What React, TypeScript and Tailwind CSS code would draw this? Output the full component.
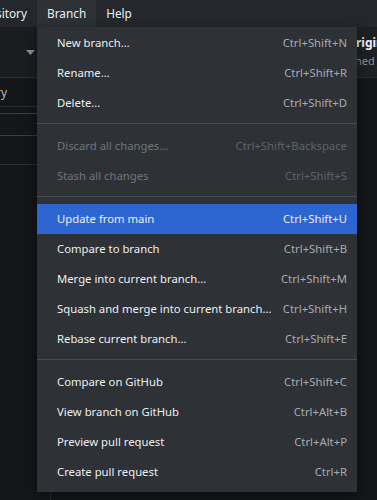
import React from "react";

type Item = { label: string; shortcut: string; disabled?: boolean; active?: boolean };

const groups: Item[][] = [
  [
    { label: "New branch…", shortcut: "Ctrl+Shift+N" },
    { label: "Rename…", shortcut: "Ctrl+Shift+R" },
    { label: "Delete…", shortcut: "Ctrl+Shift+D" },
  ],
  [
    { label: "Discard all changes…", shortcut: "Ctrl+Shift+Backspace", disabled: true },
    { label: "Stash all changes", shortcut: "Ctrl+Shift+S", disabled: true },
  ],
  [
    { label: "Update from main", shortcut: "Ctrl+Shift+U", active: true },
    { label: "Compare to branch", shortcut: "Ctrl+Shift+B" },
    { label: "Merge into current branch…", shortcut: "Ctrl+Shift+M" },
    { label: "Squash and merge into current branch…", shortcut: "Ctrl+Shift+H" },
    { label: "Rebase current branch…", shortcut: "Ctrl+Shift+E" },
  ],
  [
    { label: "Compare on GitHub", shortcut: "Ctrl+Shift+C" },
    { label: "View branch on GitHub", shortcut: "Ctrl+Alt+B" },
    { label: "Preview pull request", shortcut: "Ctrl+Alt+P" },
    { label: "Create pull request", shortcut: "Ctrl+R" },
  ],
];

const MenuRow = ({ item }: { item: Item }) => {
  const bg = item.active ? "bg-[#2e66d1]" : "";
  const labelColor = item.disabled ? "text-[#70747a]" : "text-[#eceef0]";
  const keyColor = item.disabled
    ? "text-[#5f6368]"
    : item.active
    ? "text-[#eceef0]"
    : "text-[#a6abb1]";
  return (
    <div className={`flex items-center justify-between h-[30px] pl-[20px] pr-[10px] ${bg}`}>
      <span className={`whitespace-nowrap ${labelColor}`}>{item.label}</span>
      <span className={`whitespace-nowrap pl-1 ${keyColor}`}>{item.shortcut}</span>
    </div>
  );
};

export default function App() {
  return (
    <div className="relative w-[377px] h-[500px] overflow-hidden bg-[#141619] font-['Noto_Sans','Open_Sans',sans-serif] text-[11.3px]">
      {/* Title / menu bar */}
      <div className="flex items-center h-[27px] bg-[#24272b] text-[#eceef0] text-[11.8px]">
        <div className="w-[37px] pr-[10px] flex justify-end overflow-hidden whitespace-nowrap">
          <span>sitory</span>
        </div>
        <div className="h-full flex items-center px-[10px] bg-[#2e3136]">Branch</div>
        <div className="h-full flex items-center px-[10px]">Help</div>
      </div>

      {/* Toolbar */}
      <div className="flex h-[51px] bg-[#1a1c1f] border-b border-[#2a2d31]">
        <div className="w-[44px] flex items-center justify-end pr-[8px] border-r border-[#2a2d31]">
          <svg width="9" height="5" viewBox="0 0 9 5">
            <path d="M0 0h9L4.5 5z" fill="#8b9096" />
          </svg>
        </div>
        <div className="flex-1" />
        <div className="w-[22px] flex flex-col justify-center overflow-hidden whitespace-nowrap bg-[#1e2124]">
          <span className="pl-[1px] pb-[2px] font-bold text-[#f0f2f4] text-[12px] leading-[16px]">rigin</span>
          <span className="text-[#8b9096] text-[11px] leading-[16px]">hed just now</span>
        </div>
      </div>

      {/* Body */}
      <div className="flex h-full">
        <div className="w-[51px] flex flex-col border-r border-[#2a2d31]">
          <div className="h-[29px] flex items-center pt-[2px] border-b border-[#2a2d31]">
            <div className="w-[7px] flex justify-end overflow-hidden whitespace-nowrap text-[#b4b8bd] text-[12px]">
              <span>History</span>
            </div>
          </div>
          <div className="pt-[6px] pb-[28px] border-b border-[#2a2d31]">
            <div className="-ml-[4px] h-[23px] border border-[#3a3e43] rounded-[3px] bg-[#141619]" />
          </div>
        </div>
        <div className="flex-1" />
      </div>

      {/* Branch dropdown menu */}
      <div className="absolute left-[37px] top-[27px] w-[320px] pt-px pb-[5px] bg-[#2e3136] shadow-[0_4px_12px_rgba(0,0,0,0.45)]">
        {groups.map((group, gi) => (
          <div key={gi}>
            {gi > 0 && <div className="mt-[5px] mb-[7px] h-px bg-[#474b50]" />}
            {group.map((item) => (
              <MenuRow key={item.label} item={item} />
            ))}
          </div>
        ))}
      </div>
    </div>
  );
}
